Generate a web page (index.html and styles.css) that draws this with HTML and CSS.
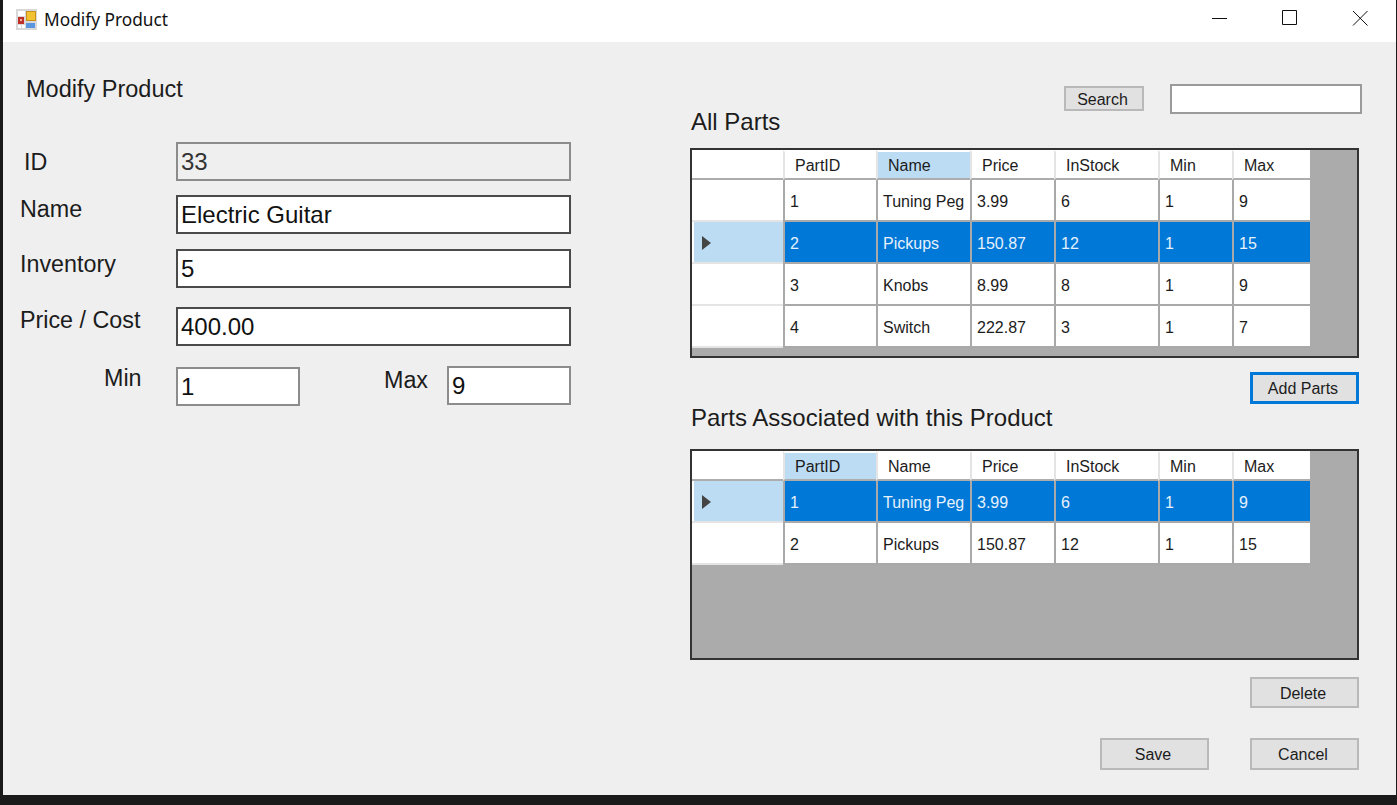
FILE: index.html
```html
<!DOCTYPE html>
<html lang="en">
<head>
    <meta charset="UTF-8">
    <meta name="viewport" content="width=device-width, initial-scale=1.0">
    <title>Modify Product</title>
    <link rel="stylesheet" href="styles.css">
</head>
<body>
    <div class="window">
        <!-- Title bar -->
        <header class="titlebar">
            <svg class="app-icon" viewBox="0 0 21 21" aria-hidden="true">
                <rect width="21" height="21" fill="#d8d8d8"/>
                <rect x="2" y="2" width="7" height="5" fill="#ffffff"/>
                <rect x="10.5" y="2.5" width="9" height="9" fill="#f2c230" stroke="#c8901c"/>
                <rect x="2" y="8" width="6" height="7" fill="#c0302a"/>
                <rect x="4" y="10" width="2" height="2" fill="#f0b0a0"/>
                <rect x="10" y="14" width="9" height="5" fill="#5a96e0"/>
                <rect x="2" y="16" width="3" height="3" fill="#ffffff"/>
                <rect x="6" y="16" width="3" height="3" fill="#ffffff"/>
            </svg>
            <span class="title-text">Modify Product</span>
            <div class="window-controls">
                <svg class="control" viewBox="0 0 16 16" aria-hidden="true"><path d="M0 8.5H15"/></svg>
                <svg class="control" viewBox="0 0 16 16" aria-hidden="true"><path d="M0.5 0.5H14.5V14.5H0.5Z"/></svg>
                <svg class="control" viewBox="0 0 16 16" aria-hidden="true"><path d="M1 1L15.5 15.5M15.5 1L1 15.5"/></svg>
            </div>
        </header>

        <main class="content">
            <!-- Product form -->
            <section class="form-panel">
                <h1 class="form-title">Modify Product</h1>
                <div class="field field-id">
                    <label class="label-id" for="id">ID</label>
                    <input class="input input-muted" type="text" id="id" value="33" disabled>
                </div>
                <div class="field field-name">
                    <label for="name">Name</label>
                    <input class="input" type="text" id="name" value="Electric Guitar">
                </div>
                <div class="field field-inventory">
                    <label for="inventory">Inventory</label>
                    <input class="input" type="text" id="inventory" value="5">
                </div>
                <div class="field field-price">
                    <label for="price">Price / Cost</label>
                    <input class="input" type="text" id="price" value="400.00">
                </div>
                <div class="field field-range">
                    <label class="label-min" for="min">Min</label>
                    <input class="input input-small input-min" type="text" id="min" value="1">
                    <label class="label-max" for="max">Max</label>
                    <input class="input input-small" type="text" id="max" value="9">
                </div>
            </section>

            <!-- Parts tables -->
            <section class="parts-panel">
                <div class="parts-head">
                    <h2 class="section-title">All Parts</h2>
                    <div class="search">
                        <button class="btn btn-search" type="button">Search</button>
                        <input class="search-input" type="text" aria-label="Search">
                    </div>
                </div>
                <div class="grid-box grid-all">
                    <table class="grid">
                        <colgroup>
                            <col class="col-head"><col class="col-id"><col class="col-name"><col class="col-price"><col class="col-stock"><col class="col-min"><col class="col-max">
                        </colgroup>
                        <thead>
                            <tr><th></th><th>PartID</th><th class="active">Name</th><th>Price</th><th>InStock</th><th>Min</th><th>Max</th></tr>
                        </thead>
                        <tbody>
                            <tr><td class="row-head"></td><td>1</td><td>Tuning Peg</td><td>3.99</td><td>6</td><td>1</td><td>9</td></tr>
                            <tr class="selected"><td class="row-head"><span class="arrow"></span></td><td>2</td><td>Pickups</td><td>150.87</td><td>12</td><td>1</td><td>15</td></tr>
                            <tr><td class="row-head"></td><td>3</td><td>Knobs</td><td>8.99</td><td>8</td><td>1</td><td>9</td></tr>
                            <tr><td class="row-head"></td><td>4</td><td>Switch</td><td>222.87</td><td>3</td><td>1</td><td>7</td></tr>
                        </tbody>
                    </table>
                </div>
                <div class="actions actions-add">
                    <button class="btn btn-focus" type="button">Add Parts</button>
                </div>
                <h2 class="section-title section-title-assoc">Parts Associated with this Product</h2>
                <div class="grid-box grid-assoc">
                    <table class="grid">
                        <colgroup>
                            <col class="col-head"><col class="col-id"><col class="col-name"><col class="col-price"><col class="col-stock"><col class="col-min"><col class="col-max">
                        </colgroup>
                        <thead>
                            <tr><th></th><th class="active">PartID</th><th>Name</th><th>Price</th><th>InStock</th><th>Min</th><th>Max</th></tr>
                        </thead>
                        <tbody>
                            <tr class="selected"><td class="row-head"><span class="arrow"></span></td><td>1</td><td>Tuning Peg</td><td>3.99</td><td>6</td><td>1</td><td>9</td></tr>
                            <tr><td class="row-head"></td><td>2</td><td>Pickups</td><td>150.87</td><td>12</td><td>1</td><td>15</td></tr>
                        </tbody>
                    </table>
                </div>
                <div class="actions actions-delete">
                    <button class="btn btn-short" type="button">Delete</button>
                </div>
                <div class="actions actions-footer">
                    <button class="btn" type="button">Save</button>
                    <button class="btn" type="button">Cancel</button>
                </div>
            </section>
        </main>
    </div>
</body>
</html>
```

FILE: styles.css
```css
html, body {
    margin: 0;
    padding: 0;
    height: 805px;
    overflow: hidden;
    background-color: #1a1a1a;
}
.window {
    margin-left: 3px;
    width: 1393px;
    height: 795px;
    background-color: #efefef;
    font-family: "Liberation Sans", Arial, sans-serif;
    color: #1c1c1c;
}
.titlebar {
    display: flex;
    align-items: center;
    height: 42px;
    padding-left: 13px;
    background-color: #fff;
    box-sizing: border-box;
}
.app-icon {
    width: 21px;
    height: 21px;
    margin-top: -4px;
}
.title-text {
    margin-left: 7px;
    font-family: "Noto Sans", sans-serif;
    font-size: 17.3px;
    color: #111;
    margin-top: -4px;
}
.window-controls {
    display: flex;
    margin-left: auto;
    margin-right: 28px;
    gap: 54px;
    margin-top: -6px;
}
.control {
    width: 16px;
    height: 16px;
    fill: none;
    stroke: #111;
    stroke-width: 1;
}
.content {
    display: flex;
}
.form-panel {
    width: 687px;
    flex: none;
    box-sizing: border-box;
    padding-left: 17px;
}
.form-title {
    margin: 32px 0 0 6px;
    font-size: 23.5px;
    font-weight: normal;
    line-height: 30px;
    height: 30px;
}
.field {
    display: flex;
    align-items: flex-start;
}
.field label {
    width: 156px;
    flex: none;
    font-size: 23.3px;
    line-height: 28px;
}
.field-id { margin-top: 38px; }
.field-name { margin-top: 14px; }
.field-inventory { margin-top: 15px; }
.field-price { margin-top: 19px; }
.field-range { margin-top: 20px; }
.label-id {
    margin-top: 6px;
    padding-left: 4px;
    box-sizing: border-box;
}
.field-inventory label { margin-top: 1px; }
.field-price label { margin-top: -1px; }
.field .label-min {
    width: 121px;
    margin-right: 35px;
    padding-left: 84px;
    box-sizing: border-box;
    margin-top: -2px;
}
.field .label-max {
    width: 44px;
    margin-left: 84px;
    margin-right: 19px;
    margin-top: 0;
}
.input {
    width: 395px;
    height: 39px;
    box-sizing: border-box;
    border: 2px solid #4a4a4a;
    padding: 0 3px;
    background-color: #fff;
    font-family: "Liberation Sans", Arial, sans-serif;
    font-size: 24px;
    color: #111;
    outline: none;
    border-radius: 0;
}
.input-muted {
    border-color: #8c8c8c;
    background-color: #efefef;
    color: #333;
}
.input-small {
    width: 124px;
    border-color: #8c8c8c;
}
.input-min {
    margin-top: 1px;
}
.parts-panel {
    width: 669px;
    flex: none;
}
.parts-head {
    display: flex;
    justify-content: space-between;
    height: 51px;
    margin-top: 42px;
}
.section-title {
    margin: 0;
    font-size: 24px;
    font-weight: normal;
    line-height: 26px;
    padding-left: 1px;
}
.parts-head .section-title {
    align-self: flex-end;
}
.search {
    display: flex;
    align-items: flex-start;
    gap: 26px;
    margin-right: -3px;
}
.search-input {
    width: 192px;
    height: 30px;
    box-sizing: border-box;
    border: 2px solid #9a9a9a;
    background-color: #fff;
    outline: none;
}
.btn {
    width: 109px;
    height: 32px;
    box-sizing: border-box;
    padding: 2px 3px 0 0;
    border: 2px solid #b9b9b9;
    background-color: #e1e1e1;
    font-family: "Liberation Sans", Arial, sans-serif;
    font-size: 16px;
    color: #1c1c1c;
}
.btn-search {
    width: 80px;
    height: 25px;
    margin-top: 2px;
    padding-top: 3px;
}
.btn-focus {
    border: 3px solid #0078d7;
}
.btn-short {
    height: 31px;
}
.grid-box {
    box-sizing: border-box;
    border: 2px solid #333;
    background-color: #ababab;
}
.grid-all {
    height: 210px;
    margin-top: 13px;
}
.grid-assoc {
    height: 211px;
    margin-top: 18px;
}
.grid {
    width: 618px;
    table-layout: fixed;
    border-collapse: separate;
    border-spacing: 0;
    font-size: 16px;
    background-color: #fff;
}
.col-head { width: 91px; }
.col-id { width: 93px; }
.col-name { width: 94px; }
.col-price { width: 84px; }
.col-stock { width: 104px; }
.col-min { width: 74px; }
.col-max { width: 78px; }
.grid th {
    height: 30px;
    box-sizing: border-box;
    padding: 1px 0 0 10px;
    border-top: 2px solid #fff;
    border-left: 2px solid #e4e4e4;
    border-bottom: 2px solid #adadad;
    font-weight: normal;
    text-align: left;
    background-clip: padding-box;
}
.grid th:first-child {
    border-left: 0;
}
.grid th.active {
    background-color: #bcdcf4;
}
.grid td {
    height: 42px;
    box-sizing: border-box;
    padding: 3px 0 0 5px;
    border-left: 2px solid #a9a9a9;
    border-bottom: 2px solid #a9a9a9;
    white-space: nowrap;
    overflow: hidden;
}
.grid td.row-head {
    border-left: 0;
    border-bottom-color: #e4e4e4;
    padding: 0 0 0 10px;
}
.grid .selected td {
    background-color: #0078d7;
    color: #e6f1fb;
}
.grid .selected td.row-head {
    background-color: #bcdcf4;
    box-shadow: inset 2px 0 0 #fff;
}
.arrow {
    display: inline-block;
    vertical-align: middle;
    width: 0;
    height: 0;
    border-top: 7px solid transparent;
    border-bottom: 7px solid transparent;
    border-left: 9px solid #444;
}
.actions {
    display: flex;
    justify-content: flex-end;
    gap: 41px;
}
.actions-add { margin-top: 14px; }
.section-title-assoc { margin-top: 1px; }
.actions-delete { margin-top: 17px; }
.actions-footer { margin-top: 30px; }
```
